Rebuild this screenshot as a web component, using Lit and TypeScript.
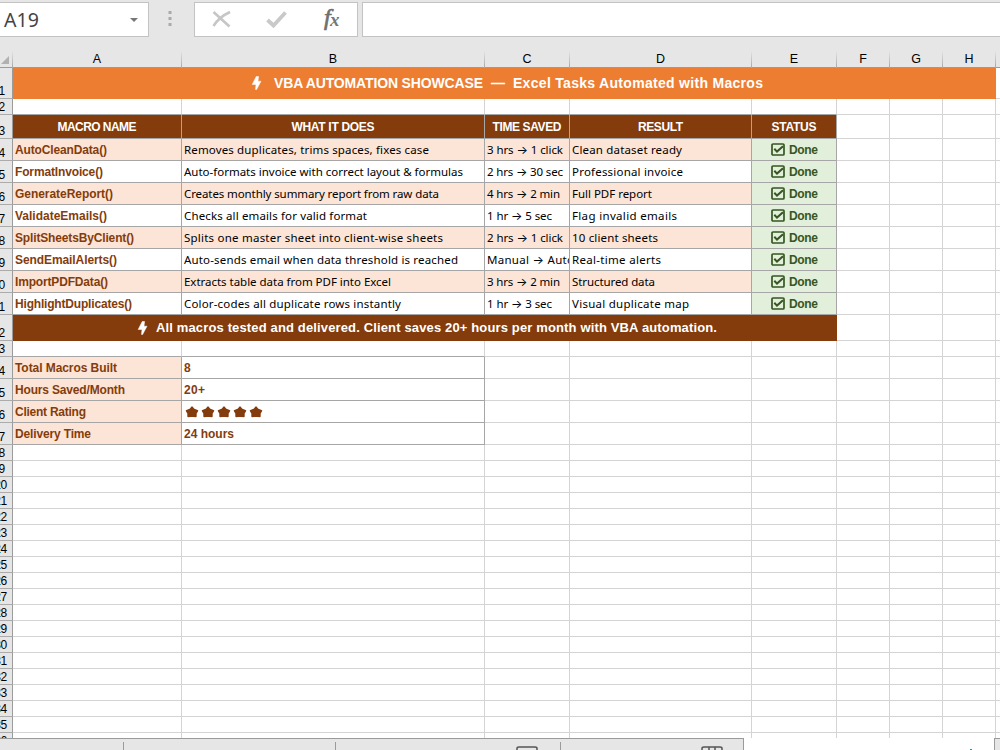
import { LitElement, html, css } from "lit";
import { customElement } from "lit/decorators.js";
import { classMap } from "lit/directives/class-map.js";

/** Text that is tracked so that it takes up a given width in pixels. */
@customElement("fit-text")
class FitText extends LitElement {
  static properties = { text: { type: String }, width: { type: Number } };
  declare text: string;
  declare width: number;
  static styles = css`
    :host { display: inline-block; white-space: pre; }
    .arrow { font-family: Inter, "DejaVu Sans", sans-serif; font-size: 12px; line-height: 1; }
  `;
  updated() {
    const span = this.renderRoot.querySelector("span") as HTMLElement;
    span.style.letterSpacing = "0px";
    const natural = span.getBoundingClientRect().width;
    const n = this.text.length;
    if (this.width && n > 1) {
      const ls = (this.width - natural) / (n - 1);
      span.style.letterSpacing = ls.toFixed(3) + "px";
      span.style.marginRight = (-ls).toFixed(3) + "px";
    }
  }
  render() {
    const [before, after] = this.text.split("→");
    return after === undefined
      ? html`<span>${before}</span>`
      : html`<span>${before}<span class="arrow">→</span>${after}</span>`;
  }
}

const bolt = html`<svg class="bolt" width="11" height="14" viewBox="0 0 11 14"><path d="M5.2 0.5H7.6L7 5.200H10L5.6 13.5H4.500L5 8.500H1.2Z" fill="#fff" stroke="#fff" stroke-width="0.5" /></svg>`;
const check = html`<svg class="check" width="14" height="13" viewBox="0 0 14 13"><rect x="1" y="1" width="12" height="11" rx="1" fill="none" stroke="#375623" stroke-width="1.7" /><path d="M3.3 5.8L6 8.6L12 3.2" fill="none" stroke="#375623" stroke-width="2" /></svg>`;
const star = html`<svg class="star" width="14" height="12" viewBox="0 0 14 12"><path d="M7 1.200L8.600 3.4L12.3 4.8L10.8 7.4L10.800 10.3L7 9.800L3.200 10.3L3.2 7.4L1.7 4.8L5.400 3.4Z" fill="#843c0c" stroke="#843c0c" stroke-width="1.8" stroke-linejoin="round" /></svg>`;

type Row = [string, number, string, number, string, number, string, number];
const macros: Row[] = [
  ["AutoCleanData()", 92, "Removes duplicates, trims spaces, fixes case", 245, "3 hrs → 1 click", 76, "Clean dataset ready", 110],
  ["FormatInvoice()", 88, "Auto-formats invoice with correct layout & formulas", 279, "2 hrs → 30 sec", 76, "Professional invoice", 111],
  ["GenerateReport()", 98, "Creates monthly summary report from raw data", 255, "4 hrs → 2 min", 73, "Full PDF report", 80],
  ["ValidateEmails()", 92, "Checks all emails for valid format", 183, "1 hr → 5 sec", 65, "Flag invalid emails", 105],
  ["SplitSheetsByClient()", 119, "Splits one master sheet into client-wise sheets", 259, "2 hrs → 1 click", 76, "10 client sheets", 86],
  ["SendEmailAlerts()", 102, "Auto-sends email when data threshold is reached", 274, "Manual → Auto", 87, "Real-time alerts", 89],
  ["ImportPDFData()", 93, "Extracts table data from PDF into Excel", 207, "3 hrs → 2 min", 73, "Structured data", 83],
  ["HighlightDuplicates()", 117, "Color-codes all duplicate rows instantly", 217, "1 hr → 3 sec", 65, "Visual duplicate map", 117],
];
const heads: [string, number][] = [["MACRO NAME", 79], ["WHAT IT DOES", 83], ["TIME SAVED", 69], ["RESULT", 45], ["STATUS", 45]];
const stats: [string, number, string, number][] = [
  ["Total Macros Built", 102, "8", 0],
  ["Hours Saved/Month", 110, "20+", 21],
  ["Client Rating", 71, "", 0],
  ["Delivery Time", 76, "24 hours", 50],
];
const letters = ["A", "B", "C", "D", "E", "F", "G", "H", ""];

@customElement("app-root")
class AppRoot extends LitElement {
  static styles = css`
    :host { display: block; width: 1000px; height: 750px; overflow: hidden; background: #fff; font-family: "Liberation Sans", Arial, sans-serif; }
    * { box-sizing: border-box; }
    svg { display: block; flex: none; }
    .app { display: flex; flex-direction: column; height: 750px; }
    .bar { display: flex; height: 48px; background: #e6e6e6; padding-top: 2px; flex: none; }
    .box { background: #fff; border: 1px solid #c3c3c3; height: 35px; display: flex; align-items: center; }
    .name { width: 149px; border-left: 0; justify-content: space-between; padding: 0 10px 0 4px; color: #444; font: 19.5px/33px "Noto Sans", sans-serif; }
    .dots { width: 45px; padding: 9px 0 0 19px; }
    .tools { width: 164px; }
    .formula { flex: 1; margin-left: 4px; border-right: 0; }
    .row { display: grid; grid-template-columns: 13px 169px 303px 85px 182px 85px 53px 53px 53px 4px; flex: none; height: 16px; }
    .sheet { height: 690px; overflow: hidden; flex: none; }
    .cols { height: 20px; background: #e6e6e6; border-bottom: 1px solid #9b9b9b; }
    .cols div { font: 12.5px/22px "Liberation Sans", sans-serif; text-align: center; color: #000; border-style: solid; border-width: 0 1px 0 0; border-image: linear-gradient(#e6e6e6 15%, #9b9b9b) 1; }
    .cols .corner { padding: 8px 0 0 1px; }
    .cols div:last-child { border: 0; }
    .num { background: #e6e6e6; border-right: 1px solid #9b9b9b; border-bottom: 1px solid #ababab; display: flex; justify-content: flex-end; align-items: flex-end; font: 12px/14px "Liberation Sans", sans-serif; letter-spacing: -0.6px; color: #000; overflow: hidden; padding-right: 7.5px; white-space: nowrap; }
    .wide .num { padding-right: 5.5px; }
    .cell { border-right: 1px solid #d4d4d4; border-bottom: 1px solid #d4d4d4; min-width: 0; overflow: hidden; white-space: nowrap; display: flex; align-items: center; }
    .row .cell:last-child { border-right: 0; }
    .lined, .lined.cell { border-color: #a6a6a6; }
    .under { border-bottom-color: #a6a6a6; }
    .h31 { height: 31px; } .h24 { height: 24px; } .h22 { height: 22px; } .h26 { height: 26px; }
    .banner { grid-column: 2 / 10; background: #ed7d31; color: #fff; font-weight: bold; font-size: 14px; display: flex; align-items: center; padding: 0 0 1px 238px; }
    .banner .bolt { margin-right: 12px; }
    .dash { margin: 0 8px; }
    .foot { grid-column: 2 / 7; background: #843c0c; color: #fff; font-weight: bold; font-size: 13px; display: flex; align-items: center; padding: 0 0 1px 124px; gap: 8px; }
    .head { background: #843c0c; color: #fff; font-weight: bold; font-size: 12px; justify-content: center; }
    .fn { color: #843c0c; font-weight: bold; font-size: 12px; padding: 0 0 0 2px; }
    .txt { color: #000; font: 11.5px/20px "Noto Sans", sans-serif; padding: 1px 0 0 2px; }
    .tint { background: #fce4d6; }
    .done { background: #e2efda; color: #375623; font-weight: bold; font-size: 12px; justify-content: center; gap: 4px; padding: 0 0 0 1px; }
    .stars { gap: 2px; padding: 1px 0 0 3px; }
    .tabs { display: flex; height: 12px; background: #e6e6e6; flex: none; }
    .tab { border-top: 1px solid #9b9b9b; display: flex; align-items: flex-end; justify-content: flex-end; }
    .tick { width: 1px; height: 8px; background: #9b9b9b; }
    .t1 { width: 124px; } .t2 { width: 212px; } .t3 { width: 225px; } .t4 { width: 183px; border-right: 1px solid #9b9b9b; }
    .t3 svg { margin-right: 22.5px; } .t4 svg { margin-right: 20.5px; }
    .active { width: 250px; background: #fff; display: flex; align-items: flex-end; justify-content: flex-end; padding-right: 22px; }
    .speck { width: 2px; height: 1px; background: #4a8a94; }
    .rest { flex: 1; border-left: 1px solid #9b9b9b; }
  `;

  blanks(n: number) {
    return Array.from({ length: n }, () => html`<div class="cell"></div>`);
  }
  fit(text: string, width: number) {
    return html`<fit-text .text=${text} .width=${width}></fit-text>`;
  }
  blankRow(n: number, underCount = 0) {
    return html`<div class=${classMap({ row: true, wide: n >= 20 })}><div class="num">${n}</div>${Array.from({ length: 9 }, (_, i) => html`<div class=${classMap({ cell: true, under: i < underCount })}></div>`)}</div>`;
  }

  render() {
    return html`<div class="app">
      <div class="bar">
        <div class="box name">${this.fit("A19", 35)}<svg width="8" height="4" viewBox="0 0 8 4"><path d="M0 0H8L4 4Z" fill="#777" /></svg></div>
        <div class="dots"><svg width="4" height="16" viewBox="0 0 4 16" fill="#aaa"><path d="M0.5 0h3v3h-3zM0.5 6h3v3h-3zM0.5 12h3v3h-3z" /></svg></div>
        <div class="box tools"><svg width="162" height="33" viewBox="0 0 162 33">
          <path d="M18.5 9L34.500 23.500M35 9Q24 14 18.500 23" stroke="#c6c6c6" stroke-width="2.600" fill="none" />
          <path d="M72.500 17L78.500 22.500L90.500 9.500" stroke="#c9c9c9" stroke-width="3.800" fill="none" />
          <text x="129" y="22" font-family="Liberation Serif" font-style="italic" font-size="24" fill="#6f6f6f" stroke="#6f6f6f" stroke-width="0.7">f</text>
          <text x="135" y="23" font-family="Liberation Serif" font-style="italic" font-weight="bold" font-size="19" fill="#777">x</text>
        </svg></div>
        <div class="box formula"></div>
      </div>
      <div class="sheet">
        <div class="row cols"><div class="corner"><svg width="8" height="8" viewBox="0 0 8 8"><path d="M8 0V8H0Z" fill="#b1b1b1" /></svg></div>${letters.map((l) => html`<div>${l}</div>`)}</div>
        <div class="row h31"><div class="num">1</div><div class="banner">${bolt}${this.fit("VBA AUTOMATION SHOWCASE", 209)}<span class="dash">—</span>${this.fit("Excel Tasks Automated with Macros", 250)}</div><div class="cell"></div></div>
        ${this.blankRow(2, 5)}
        <div class="row h24"><div class="num">3</div>${heads.map(([t, w]) => html`<div class="cell lined head">${this.fit(t, w)}</div>`)}${this.blanks(4)}</div>
        ${macros.map((m, i) => {
          const tint = i % 2 === 0;
          return html`<div class="row h22"><div class="num">${i + 4}</div>
            <div class=${classMap({ cell: true, lined: true, fn: true, tint })}>${this.fit(m[0], m[1])}</div>
            <div class=${classMap({ cell: true, lined: true, txt: true, tint })}>${this.fit(m[2], m[3])}</div>
            <div class=${classMap({ cell: true, lined: true, txt: true, tint })}>${this.fit(m[4], m[5])}</div>
            <div class=${classMap({ cell: true, lined: true, txt: true, tint })}>${this.fit(m[6], m[7])}</div>
            <div class="cell lined done">${check}${this.fit("Done", 29)}</div>${this.blanks(4)}</div>`;
        })}
        <div class="row h26"><div class="num">12</div><div class="foot">${bolt}${this.fit("All macros tested and delivered. Client saves 20+ hours per month with VBA automation.", 561)}</div>${this.blanks(4)}</div>
        ${this.blankRow(13, 2)}
        ${stats.map(([l, lw, v, vw], i) => html`<div class="row h22"><div class="num">${i + 14}</div>
          <div class="cell lined fn tint">${this.fit(l, lw)}</div>
          <div class=${classMap({ cell: true, lined: true, fn: true, stars: !v })}>${v ? this.fit(v, vw) : [1, 2, 3, 4, 5].map(() => star)}</div>${this.blanks(7)}</div>`)}
        ${Array.from({ length: 19 }, (_, i) => this.blankRow(i + 18))}
      </div>
      <div class="tabs">
        <div class="tab t1"><div class="tick"></div></div>
        <div class="tab t2"><div class="tick"></div></div>
        <div class="tab t3"><svg width="22" height="4" viewBox="0 0 22 4"><path d="M1 4V2.500Q1 1 3 1H19Q21 1 21 2.500V4" fill="none" stroke="#555" stroke-width="1.500" /></svg><div class="tick"></div></div>
        <div class="tab t4"><svg width="22" height="4" viewBox="0 0 22 4"><path d="M1 4V2.500Q1 1 3 1H19Q21 1 21 2.500V4M8 1V4M14 1V4" fill="none" stroke="#555" stroke-width="1.500" /></svg></div>
        <div class="active"><div class="speck"></div></div>
        <div class="tab rest"></div>
      </div>
    </div>`;
  }
}
